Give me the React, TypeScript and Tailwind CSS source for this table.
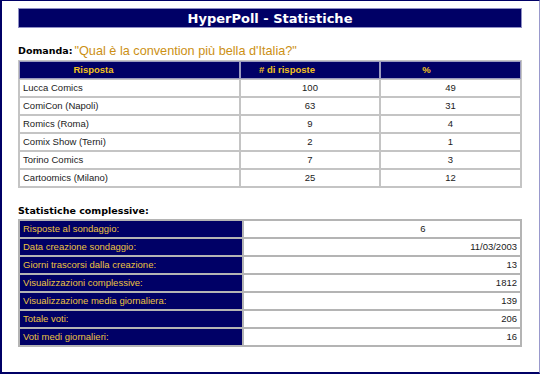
import React from "react";

const risposte = [
  { nome: "Lucca Comics", voti: 100, perc: 49 },
  { nome: "ComiCon (Napoli)", voti: 63, perc: 31 },
  { nome: "Romics (Roma)", voti: 9, perc: 4 },
  { nome: "Comix Show (Terni)", voti: 2, perc: 1 },
  { nome: "Torino Comics", voti: 7, perc: 3 },
  { nome: "Cartoomics (Milano)", voti: 25, perc: 12 },
];

const statistiche = [
  { label: "Risposte al sondaggio:", value: "6", centered: true },
  { label: "Data creazione sondaggio:", value: "11/03/2003" },
  { label: "Giorni trascorsi dalla creazione:", value: "13" },
  { label: "Visualizzazioni complessive:", value: "1812" },
  { label: "Visualizzazione media giornaliera:", value: "139" },
  { label: "Totale voti:", value: "206" },
  { label: "Voti medi giornalieri:", value: "16" },
];

const verdana = "font-['DejaVu_Sans',Verdana,sans-serif]";
const arial = "font-['Liberation_Sans',Arial,sans-serif]";

export default function App() {
  return (
    <div className="w-[540px] h-[374px] bg-white border-t border-l-2 border-b-2 border-r border-t-[#000066] border-l-[#000066] border-b-[#000066] border-r-[#9999cc] overflow-hidden">
      <div className="ml-[16px] w-[504px] flex flex-col">
        {/* page title */}
        <div className="mt-[7px] h-[20px] bg-[#000066] border border-[#8f8fc4] flex items-center justify-center">
          <span className={`${verdana} text-[13px] font-bold text-white leading-none`}>
            HyperPoll - Statistiche
          </span>
        </div>

        {/* question */}
        <div className="mt-[15px] h-[17px] flex items-center gap-[2px]">
          <span className={`${verdana} text-[9.5px] font-bold text-black`}>Domanda:</span>
          <span className={`${arial} text-[12.7px] text-[#cc9014]`}>"Qual è la convention più bella d'Italia?"</span>
        </div>

        {/* answers table */}
        <table className={`${arial} w-[504px] table-fixed border-separate border-spacing-0 border border-[#c4c4c4] text-[9.5px]`}>
          <colgroup>
            <col className="w-[221px]" />
            <col className="w-[140px]" />
            <col className="w-[141px]" />
          </colgroup>
          <thead>
            <tr className="h-[18px] bg-[#000066] text-[#f2c21c] font-bold">
              <th className="border border-[#9a9abf] p-0 pr-[72px] text-center font-bold">Risposta</th>
              <th className="border border-[#9a9abf] p-0 pr-[46px] text-center font-bold"># di risposte</th>
              <th className="border border-[#9a9abf] p-0 pr-[48px] text-center font-bold">%</th>
            </tr>
          </thead>
          <tbody className="text-[#1a1a1a]">
            {risposte.map((r) => (
              <tr key={r.nome} className="h-[18px]">
                <td className="border border-[#c4c4c4] p-0 pl-[3px]">{r.nome}</td>
                <td className="border border-[#c4c4c4] p-0 text-center">{r.voti}</td>
                <td className="border border-[#c4c4c4] p-0 text-center">{r.perc}</td>
              </tr>
            ))}
          </tbody>
        </table>

        {/* overall stats */}
        <div className="mt-[15px] h-[16px] flex items-center">
          <span className={`${verdana} text-[9.5px] font-bold text-black`}>Statistiche complessive:</span>
        </div>

        <table className={`${arial} w-[504px] table-fixed border-separate border-spacing-0 border border-[#b4b4b4] text-[9.5px]`}>
          <colgroup>
            <col className="w-[224px]" />
            <col className="w-[278px]" />
          </colgroup>
          <tbody>
            {statistiche.map((s) => (
              <tr key={s.label} className="h-[18px]">
                <td className="border border-[#b4b4b4] bg-[#000066] text-[#ecc240] p-0 pl-[3px]">{s.label}</td>
                <td
                  className={
                    s.centered
                      ? "border border-[#b4b4b4] p-0 pl-[82px] text-center text-[#1a1a1a]"
                      : "border border-[#b4b4b4] p-0 pr-[3px] text-right text-[#1a1a1a]"
                  }
                >
                  {s.value}
                </td>
              </tr>
            ))}
          </tbody>
        </table>
      </div>
    </div>
  );
}
